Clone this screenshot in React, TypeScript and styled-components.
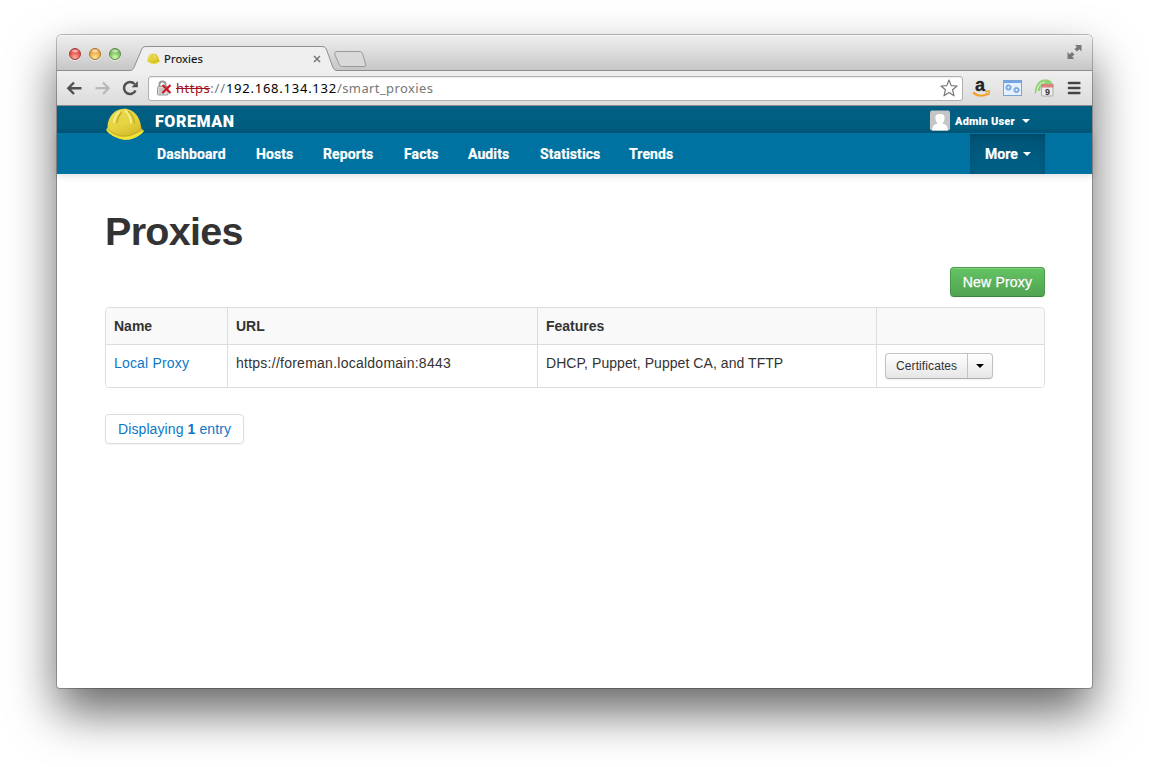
import React from "react";
import styled, { createGlobalStyle } from "styled-components";

const Global = createGlobalStyle`
  * { box-sizing: border-box; }
  html, body { margin: 0; background: #fff; overflow: hidden; }
  body { font: 14px/20px "Liberation Sans", Helvetica, sans-serif; color: #333; }
  svg { display: block; flex: none; overflow: visible; }
`;
const Desktop = styled.div`
  width: 1149px; height: 767px; padding: 35px 57px 0; overflow: hidden;
`;
const Window = styled.div`
  width: 1035px; height: 653px; border-radius: 5px 5px 3px 3px; background: #fff;
  box-shadow: 0 0 0 1px rgba(0,0,0,.25), 0 24px 48px rgba(0,0,0,.6);
`;
const TitleBar = styled.div`
  height: 36px; display: flex; align-items: flex-end;
  background: linear-gradient(#ededed, #e1e1e1 35%, #c6c6c6);
  border-radius: 5px 5px 0 0; border-bottom: 1px solid #8e8e8e; border-top: 1px solid #f5f5f5;
`;
const Lights = styled.div`
  display: flex; gap: 8px; padding: 0 0 10px 12px; width: 76px; flex: none;
`;
const Light = styled.span<{ $rim: string; $mid: string; $glow: string }>`
  width: 12px; height: 12px; border-radius: 50%; border: 1px solid ${p => p.$rim};
  background: radial-gradient(ellipse 5px 2px at 50% 20%, rgba(255,255,255,.85), transparent),
    radial-gradient(circle at 50% 85%, ${p => p.$glow}, ${p => p.$mid} 65%);
  box-shadow: 0 1px 0 rgba(255,255,255,.6);
`;
const Tab = styled.div`
  position: relative; height: 25px; width: 201px; margin-bottom: -1px; display: flex; align-items: center;
  padding: 0 13px 0 14px; flex: none;
`;
const TabShape = styled.svg` position: absolute; left: 0; top: 0; `;
const TabTitle = styled.span`
  position: relative; flex: 1; margin-left: 4px; color: #111; font: 11.2px/14px "Noto Sans", sans-serif; letter-spacing: .12px;
  -webkit-text-stroke: .15px #111;
`;
const Above = styled.div` position: relative; display: flex; `;
const NewTab = styled.div` padding: 0 0 2px 0; flex: 1; `;
const FullScreen = styled.div` padding: 0 10px 10px 0; `;
const Toolbar = styled.div`
  height: 35px; display: flex; align-items: center; padding: 0 9px;
  background: linear-gradient(#efefef, #dcdcdc); border-bottom: 1px solid #8d8d8d;
`;
const NavIcons = styled.div` display: flex; width: 82px; gap: 11px; flex: none; `;
const Address = styled.div`
  width: 815px; height: 25px; display: flex; align-items: center; border: 1px solid #b0b0b0; border-radius: 3px;
  background: #fff; padding: 0 4px 0 7px; box-shadow: inset 0 1px 1px rgba(0,0,0,.08); flex: none;
`;
const Url = styled.span`
  flex: 1; padding-left: 5px; font: 13px/18px "Noto Sans", sans-serif; color: #777; white-space: nowrap; letter-spacing: .85px;
  b { font-weight: 400; color: #000; letter-spacing: .76px; }
  s { color: #a2121c; letter-spacing: .5px; }
`;
const Path = styled.span` letter-spacing: .4px; `;
const Extensions = styled.div` display: flex; align-items: center; margin-left: 9px; gap: 12px; `;
const StoreIcon = styled.div`
  width: 19px; height: 20px; display: grid; justify-items: center; align-content: start;
  > * { grid-area: 1 / 1; }
`;
const StoreLetter = styled.span`
  margin-right: 3px; color: #222; font: 700 18px/14px "Liberation Sans", sans-serif; -webkit-text-stroke: .3px #222;
`;
const CalendarIcon = styled.div`
  width: 20px; height: 18px; display: grid;
  > * { grid-area: 1 / 1; }
`;
const CalendarDay = styled.span`
  justify-self: end; align-self: end; padding-right: 4px; color: #333; font: 700 9px/9px "Liberation Sans", sans-serif;
`;
const Brandbar = styled.div`
  height: 28px; display: flex; align-items: center; background: linear-gradient(#005f84, #005d7f 80%, #00577a);
  border-bottom: 1px solid #007ba9; padding: 2px 62px 0 49px;
`;
const Logo = styled.div` width: 49px; height: 25px; position: relative; z-index: 2; svg { position: absolute; top: 0; left: 0; } `;
const Brand = styled.span`
  flex: 1; color: #fff; font: 900 16px/24px Roboto, sans-serif; padding-top: 2px; letter-spacing: .6px;
`;
const User = styled.div`
  display: flex; align-items: center; color: #fff; font: 900 11px/20px Roboto, sans-serif; gap: 5px; height: 24px;
`;
const UserName = styled.span` width: 62px; white-space: nowrap; letter-spacing: .15px; padding-top: 3px; `;
const Caret = styled.i<{ $dark?: boolean }>`
  width: 0; height: 0; border: 4px solid transparent; border-bottom: 0; border-top-color: ${p => (p.$dark ? "#000" : "#fff")};
`;
const Menu = styled.nav`
  height: 40px; display: flex; align-items: stretch; background: #0072a1; padding: 0 47px 0 85px; box-shadow: 0 1px 8px rgba(0,0,0,.16);
`;
const Item = styled.a<{ $w: number }>`
  width: ${p => p.$w + 30}px; padding: 0 15px; color: #fff; font: 700 14px/41px Roboto, sans-serif; letter-spacing: .1px; white-space: nowrap;
  -webkit-text-stroke: .2px #fff;
`;
const More = styled.a`
  margin-left: auto; width: 75px; display: flex; align-items: center; gap: 5px; padding-left: 15px; color: #fff;
  font: 700 14px/41px Roboto, sans-serif; background: linear-gradient(#005476, #006088); box-shadow: inset 0 2px 6px rgba(0,0,0,.15);
  -webkit-text-stroke: .2px #fff;
`;
const Content = styled.main` padding: 37px 47px 0 48px; width: 1035px; `;
const Heading = styled.h1` margin: 0; font: 700 39.5px/40px "Liberation Sans", sans-serif; color: #333; letter-spacing: -.7px; `;
const Actions = styled.div` display: flex; justify-content: flex-end; padding: 16px 0 10px; `;
const PrimaryButton = styled.button`
  width: 95px; height: 30px; padding: 0; border: 1px solid #4a9a4a; border-bottom-color: #3c853c; border-radius: 4px;
  background: linear-gradient(#62c462, #51a351); color: #fff; font: 14px/20px "Liberation Sans", sans-serif;
  -webkit-text-stroke: .3px #fff; text-shadow: 0 -1px 0 rgba(0,0,0,.25); letter-spacing: .2px;
  box-shadow: inset 0 1px 0 rgba(255,255,255,.2), 0 1px 2px rgba(0,0,0,.05);
`;
const Table = styled.div` border: 1px solid #ddd; border-radius: 4px; width: 940px; overflow: hidden; `;
const Row = styled.div<{ $head?: boolean }>`
  display: grid; grid-template-columns: 121px 310px 339px 168px; height: ${p => (p.$head ? 36 : 43)}px;
  background: ${p => (p.$head ? "#f9f9f9" : "#fff")}; font-weight: ${p => (p.$head ? 700 : 400)};
  & + & { border-top: 1px solid #ddd; }
`;
const Cell = styled.div<{ $track?: number }>`
  padding: 8px; white-space: nowrap; letter-spacing: ${p => p.$track ?? 0}px;
  & + & { border-left: 1px solid #ddd; }
`;
const Link = styled.a` color: #0b78c8; `;
const Split = styled.div`
  width: 108px; height: 26px; display: flex; border: 1px solid #c2c2c2; border-bottom-color: #adadad; border-radius: 4px;
  background: linear-gradient(#fff, #e6e6e6); font-size: 12px; line-height: 24px; box-shadow: 0 1px 2px rgba(0,0,0,.05);
`;
const SplitLabel = styled.span` width: 81px; padding-left: 10px; letter-spacing: .1px; `;
const SplitToggle = styled.span` flex: 1; display: flex; align-items: center; justify-content: center; border-left: 1px solid #c2c2c2; `;
const Pager = styled.div`
  margin-top: 26px; width: 139px; height: 30px; border: 1px solid #ddd; border-radius: 4px; color: #0b78c8; line-height: 28px;
  padding-left: 12px; box-shadow: 0 1px 2px rgba(0,0,0,.05); white-space: nowrap; letter-spacing: .1px;
`;

const Helmet = ({ size, id }: { size: number; id: string }) => (
  <svg width={size} height={size * 0.87} viewBox="0 0 38 33">
    <defs>
      <linearGradient id={id} x1=".2" y1="0" x2=".7" y2="1"><stop stopColor="#eadb55" /><stop offset=".5" stopColor="#e6d340" /><stop offset="1" stopColor="#cdb524" /></linearGradient>
    </defs>
    <path d="M1.5 20C1.5 12 5 5 12 2C15 .8 17 1 19.5 .6L22 1.2C30 3 34.5 11 35.5 21L37.7 22.3C37.8 24 36 25.5 33 27.5C28.5 30.6 23 32.4 17 31.5C10 30.4 3 26 .6 22.5C.1 21.5 .6 20.5 1.5 20Z" fill={`url(#${id})`} />
    <path d="M.6 21.2C5 26 12 29.2 19 29C26.5 28.5 32 24.5 37.7 22.3C37.8 24 36 25.5 33 27.5C28.5 30.6 23 32.4 17 31.5C10 30.4 3 26 .6 22.5Z" fill="#f2e338" />
    <path d="M2.2 21C7 25.7 13 28 19 27.8C26.5 27.3 31 23.5 35.4 21.4" fill="none" stroke="#c0a820" strokeWidth=".8" />
    <path d="M13 4C9.5 7 8.5 10 8 14M19.5 3C23.5 6 24.5 10.5 25 14.5" fill="none" stroke="#f5ec8a" strokeWidth="2" strokeLinecap="round" />
    <path d="M15.5 4.5C12.5 7.5 11.5 11 11 14.5M22.5 3.5C26.5 6.5 28 10.5 28.5 15" fill="none" stroke="#c0a822" strokeWidth="1.3" strokeLinecap="round" />
  </svg>
);

const tabs: [string, number][] = [["Dashboard", 69], ["Hosts", 37], ["Reports", 51], ["Facts", 34], ["Audits", 42], ["Statistics", 59], ["Trends", 45]];

export default function App() {
  return (
    <Desktop>
      <Global />
      <Window>
        <TitleBar>
          <Lights>
            <Light $rim="#a13b35" $mid="#e2463f" $glow="#ffb0a0" />
            <Light $rim="#a9732d" $mid="#eba33a" $glow="#ffe793" />
            <Light $rim="#568c43" $mid="#72b957" $glow="#d4ffb0" />
          </Lights>
          <Tab>
            <TabShape width="201" height="25" viewBox="0 0 201 25">
              <path d="M-2 24.5C0 24 1 22 2 19L8 5C9 2 10 .5 13 .5H189C192 .5 193 2 194 5L199 19C200 22 201 24 203 24.5V25H-2Z" fill="#efefef" />
              <path d="M-2 24.5C0 24 1 22 2 19L8 5C9 2 10 .5 13 .5H189C192 .5 193 2 194 5L199 19C200 22 201 24 203 24.5" fill="none" stroke="#919191" />
            </TabShape>
            <Above><Helmet size={13} id="tiny" /></Above>
            <TabTitle>Proxies</TabTitle>
            <Above><svg width="8" height="8" viewBox="0 0 8 8"><path d="M1 1L7 7M7 1L1 7" stroke="#777" strokeWidth="1.5" /></svg></Above>
          </Tab>
          <NewTab><svg width="33" height="17" viewBox="0 0 33 17"><path d="M3 .5H25C27 .5 28 1 29 4L31.5 13C32 15 31.5 15.5 30 15.5H9C7 15.5 6 15 5 13L1 4C0 2 1 .5 3 .5Z" fill="#d9d9d9" stroke="#999" /></svg></NewTab>
          <FullScreen>
            <svg width="15" height="15" viewBox="0 0 15 15" fill="#777"><path d="M8 0H14.5V6.5L12.3 4.3L10 6.5L7.5 4L9.9 1.9Z" /><path d="M0.5 7L2.7 9.2L5 7L7.5 9.5L5.2 11.6L7 14H.5Z" /></svg>
          </FullScreen>
        </TitleBar>
        <Toolbar>
          <NavIcons>
            <svg width="17" height="16" viewBox="0 0 17 16"><path d="M8 2.5L2.3 8.2L8 14M2 8.2H15.5" fill="none" stroke="#505050" strokeWidth="2.4" /></svg>
            <svg width="17" height="16" viewBox="0 0 17 16"><path d="M9 2.5L14.7 8.2L9 14M15 8.2H1.5" fill="none" stroke="#b8b8b8" strokeWidth="2.2" /></svg>
            <svg width="17" height="16" viewBox="0 0 17 16"><path d="M13.5 10.5A6 6 0 1 1 12.5 4" fill="none" stroke="#505050" strokeWidth="2.5" /><path d="M15.8 1V7.2H9.6Z" fill="#505050" /></svg>
          </NavIcons>
          <Address>
            <svg width="15" height="16" viewBox="0 0 15 16"><path d="M3.5 8V4C3.5 .5 9.5 .5 9.5 4V7" fill="none" stroke="#999" strokeWidth="2" /><rect x="1.5" y="6.5" width="10.5" height="8.5" rx="1" fill="#ddd" stroke="#999" /><path d="M3 9H8M3 11H8M3 13H8" stroke="#aaa" /><path d="M6.5 5L14.5 13M14.5 5L6.5 13" stroke="#cf1720" strokeWidth="2.2" /></svg>
            <Url><s>https</s>://<b>192.168.134.132</b><Path>/smart_proxies</Path></Url>
            <svg width="18" height="18" viewBox="0 0 18 18"><path d="M9 1L11.2 6.6L17 7L12.6 10.8L14 16.8L9 13.4L4 16.8L5.4 10.8L1 7L6.8 6.6Z" fill="#fff" stroke="#777" strokeWidth="1.2" strokeLinejoin="round" /></svg>
          </Address>
          <Extensions>
            <StoreIcon>
              <StoreLetter>a</StoreLetter>
              <svg width="19" height="20" viewBox="0 0 19 20"><path d="M1 14.4C6 19 12 18.2 16 15.5" fill="none" stroke="#f3a02c" strokeWidth="2.3" /><path d="M13 13.4L17.4 13.1L16.7 17.2" fill="none" stroke="#f3a02c" strokeWidth="1.5" /></svg>
            </StoreIcon>
            <svg width="19" height="17" viewBox="0 0 19 17"><rect x=".5" y=".5" width="18" height="15" fill="#e5f1ff" stroke="#79a2d7" /><path d="M1 1H18V3H1Z" fill="#70a6e9" /><circle cx="5.5" cy="7.5" r="1.9" fill="none" stroke="#76a7e0" strokeWidth="1.5" /><circle cx="5.5" cy="7.5" r="2.8" fill="none" stroke="#76a7e0" strokeDasharray="1.2 1" /><circle cx="13.5" cy="10" r="1.9" fill="none" stroke="#76a7e0" strokeWidth="1.5" /><circle cx="13.5" cy="10" r="2.8" fill="none" stroke="#76a7e0" strokeDasharray="1.2 1" /></svg>
            <CalendarIcon>
              <svg width="20" height="18" viewBox="0 0 20 18"><path d="M1 15.5C0 8 4 .5 11 .5C16 .5 18 2.5 19 6L7 6L6 12L3 12Z" fill="#8fd174" /><path d="M3 13C3 8 6 4 11 3" fill="none" stroke="#d0f4bb" strokeWidth="1.2" /><rect x="7.5" y="5.5" width="11.5" height="11.5" rx="1" fill="#eee" stroke="#aaa" /><path d="M7 5H19.5V8.5H7Z" fill="#d98480" /></svg>
              <CalendarDay>9</CalendarDay>
            </CalendarIcon>
            <svg width="14" height="14" viewBox="0 0 14 14"><path d="M3 2H13.3M3 7H13.3M3 12H13.3" stroke="#434343" strokeWidth="2.7" strokeLinecap="round" /></svg>
          </Extensions>
        </Toolbar>
        <Brandbar>
          <Logo><Helmet size={38} id="large" /></Logo>
          <Brand>FOREMAN</Brand>
          <User>
            <svg width="20" height="20" viewBox="0 0 20 20"><rect y="-.5" width="20" height="20" rx="2" fill="#c5c5c5" /><path d="M10 3C14 3 15 4.5 14.5 7.8C14.2 10.5 13 11.5 12.5 12.5C16 13.5 17.5 14.5 17.8 19.5H2.2C2.5 14.5 4 13.5 7.5 12.5C7 11.5 5.8 10.5 5.5 7.8C5 4.5 6 3 10 3Z" fill="#fff" /></svg>
            <UserName>Admin User</UserName>
            <Caret />
          </User>
        </Brandbar>
        <Menu>
          {tabs.map(([t, w]) => <Item key={t} $w={w}>{t}</Item>)}
          <More>More <Caret /></More>
        </Menu>
        <Content>
          <Heading>Proxies</Heading>
          <Actions><PrimaryButton>New Proxy</PrimaryButton></Actions>
          <Table>
            <Row $head><Cell>Name</Cell><Cell>URL</Cell><Cell>Features</Cell><Cell /></Row>
            <Row>
              <Cell $track={0.18}><Link>Local Proxy</Link></Cell>
              <Cell $track={0.25}>https://foreman.localdomain:8443</Cell>
              <Cell $track={0.06}>DHCP, Puppet, Puppet CA, and TFTP</Cell>
              <Cell><Split><SplitLabel>Certificates</SplitLabel><SplitToggle><Caret $dark /></SplitToggle></Split></Cell>
            </Row>
          </Table>
          <Pager>Displaying <b>1</b> entry</Pager>
        </Content>
      </Window>
    </Desktop>
  );
}
